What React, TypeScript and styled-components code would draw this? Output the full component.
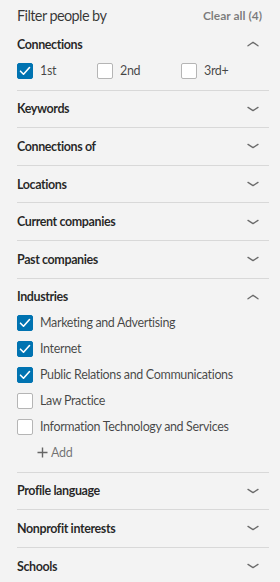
import React, { useState } from 'react'
import styled, { createGlobalStyle } from 'styled-components'

const GlobalStyle = createGlobalStyle`
  html, body {
    margin: 0;
    padding: 0;
    background: #f3f3f3;
  }
  body {
    font-family: "Lato", "Open Sans", "Liberation Sans", sans-serif;
    color: rgba(0,0,0,0.9);
  }
`;

const Panel = styled.aside`
  width: 280px;
  box-sizing: border-box;
  padding: 0 11px 0 17px;
  background: #f3f3f3;
`;

const TopBar = styled.div`
  display: flex;
  align-items: center;
  justify-content: space-between;
  height: 22px;
  padding: 4px 7px 0 0;
`;

const Heading = styled.h2`
  margin: 0;
  font-size: 14.5px;
  font-weight: 400;
  letter-spacing: -0.6px;
  color: rgba(0,0,0,0.78);
`;

const ClearAll = styled.button`
  border: none;
  background: none;
  padding: 0;
  font-family: inherit;
  font-size: 12px;
  font-weight: 700;
  color: rgba(0,0,0,0.5);
  cursor: pointer;
`;

const Section = styled.section`
  border-bottom: 1px solid #d8d8d8;
  &:last-child {
    border-bottom: none;
  }
`;

const SectionHeader = styled.button`
  display: flex;
  width: 100%;
  align-items: center;
  justify-content: space-between;
  height: 36.6px;
  padding: 0 10px 0 0;
  border: none;
  background: none;
  font-family: inherit;
  font-size: 12.5px;
  font-weight: 700;
  letter-spacing: -0.4px;
  color: rgba(0,0,0,0.85);
  cursor: pointer;
  text-align: left;
`;

const Inline = styled.div`
  display: flex;
  padding-bottom: 6px;
  margin-top: -5px;
`;

const Stack = styled.div`
  display: flex;
  flex-direction: column;
  padding-bottom: 6px;
  margin-top: -5.6px;
`;

const Option = styled.label<{ $width?: number }>`
  display: flex;
  align-items: center;
  gap: 7px;
  height: 26px;
  width: ${p => (p.$width ? `${p.$width}px` : 'auto')};
  font-size: 12.5px;
  letter-spacing: -0.35px;
  color: rgba(0,0,0,0.72);
  cursor: pointer;
`;

const Box = styled.span<{ $on: boolean }>`
  display: flex;
  align-items: center;
  justify-content: center;
  width: 16px;
  height: 16px;
  box-sizing: border-box;
  border-radius: 2px;
  border: 1px solid ${p => (p.$on ? '#0073b1' : '#b5b5b5')};
  background: ${p => (p.$on ? '#0073b1' : '#fff')};
  flex-shrink: 0;
`;

const AddLink = styled.button`
  display: flex;
  align-items: center;
  gap: 3px;
  height: 26px;
  margin-left: 20px;
  padding: 0;
  border: none;
  background: none;
  font-family: inherit;
  font-size: 12.5px;
  letter-spacing: -0.3px;
  color: rgba(0,0,0,0.55);
  cursor: pointer;
`;

const Chevron = ({ up }: { up?: boolean }) => (
  <svg width="12" height="8" viewBox="0 0 12 8" fill="none">
    <path
      d={up ? 'M1 5.8 L6 2.2 L11 5.8' : 'M1 2.4 L6 5.6 L11 2.4'}
      stroke="#6b6b6b"
      strokeWidth="1.3"
      strokeLinecap="round"
      strokeLinejoin="round"
    />
  </svg>
)

const Check = () => (
  <svg width="12" height="10" viewBox="0 0 12 10" fill="none">
    <path d="M1.5 5.2 L4.5 8.2 L10.5 1.5" stroke="#fff" strokeWidth="1.6" strokeLinecap="round" strokeLinejoin="round" />
  </svg>
)

const Plus = () => (
  <svg width="11" height="11" viewBox="0 0 11 11">
    <path d="M5.5 0.5 V10.5 M0.5 5.5 H10.5" stroke="#666" strokeWidth="1.4" />
  </svg>
)

const CheckOption = ({ label, on, width, onToggle }: { label: string; on: boolean; width?: number; onToggle: () => void }) => (
  <Option $width={width} onClick={onToggle}>
    <Box $on={on}>{on && <Check />}</Box>
    {label}
  </Option>
)

const App = () => {
  const [conn, setConn] = useState<Record<string, boolean>>({ '1st': true, '2nd': false, '3rd+': false })
  const [ind, setInd] = useState<Record<string, boolean>>({
    'Marketing and Advertising': true,
    'Internet': true,
    'Public Relations and Communications': true,
    'Law Practice': false,
    'Information Technology and Services': false,
  })

  const collapsed1 = ['Keywords', 'Connections of', 'Locations', 'Current companies', 'Past companies']
  const collapsed2 = ['Profile language', 'Nonprofit interests', 'Schools']

  return (
    <>
      <GlobalStyle />
      <Panel>
        <TopBar>
          <Heading>Filter people by</Heading>
          <ClearAll>Clear all (4)</ClearAll>
        </TopBar>

        <Section>
          <SectionHeader>
            Connections
            <Chevron up />
          </SectionHeader>
          <Inline>
            {Object.keys(conn).map((k, i) => (
              <CheckOption
                key={k}
                label={k}
                on={conn[k]}
                width={i === 0 ? 80 : 84}
                onToggle={() => setConn({ ...conn, [k]: !conn[k] })}
              />
            ))}
          </Inline>
        </Section>

        {collapsed1.map(t => (
          <Section key={t}>
            <SectionHeader>
              {t}
              <Chevron />
            </SectionHeader>
          </Section>
        ))}

        <Section>
          <SectionHeader>
            Industries
            <Chevron up />
          </SectionHeader>
          <Stack>
            {Object.keys(ind).map(k => (
              <CheckOption key={k} label={k} on={ind[k]} onToggle={() => setInd({ ...ind, [k]: !ind[k] })} />
            ))}
            <AddLink>
              <Plus />
              Add
            </AddLink>
          </Stack>
        </Section>

        {collapsed2.map(t => (
          <Section key={t}>
            <SectionHeader>
              {t}
              <Chevron />
            </SectionHeader>
          </Section>
        ))}
      </Panel>
    </>
  )
}

export default App
